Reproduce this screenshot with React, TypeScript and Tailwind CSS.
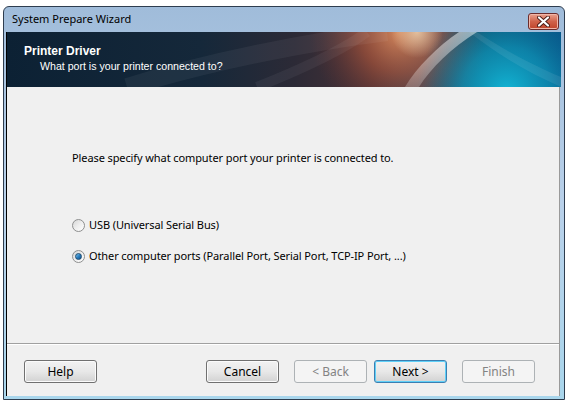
import React from "react";

const UI_FONT = "font-['Noto_Sans','Open_Sans',sans-serif]";

function Banner() {
  return (
    <svg
      className="absolute inset-0"
      width="554"
      height="55"
      viewBox="0 0 554 55"
      preserveAspectRatio="none"
    >
      <defs>
        <linearGradient id="base" x1="0" y1="0" x2="1" y2="0">
          <stop offset="0" stopColor="#0c2134" />
          <stop offset="0.35" stopColor="#15283a" />
          <stop offset="0.52" stopColor="#2c2a36" />
          <stop offset="0.66" stopColor="#4a3236" />
          <stop offset="0.76" stopColor="#4b4d58" />
          <stop offset="0.86" stopColor="#0f5a78" />
          <stop offset="1" stopColor="#08558a" />
        </linearGradient>
        <radialGradient id="orange" cx="392" cy="0" r="90" gradientUnits="userSpaceOnUse">
          <stop offset="0" stopColor="#e39060" stopOpacity="0.9" />
          <stop offset="0.45" stopColor="#b85a3c" stopOpacity="0.55" />
          <stop offset="1" stopColor="#6a3030" stopOpacity="0" />
        </radialGradient>
        <radialGradient id="cream" cx="410" cy="0" r="26" gradientUnits="userSpaceOnUse">
          <stop offset="0" stopColor="#f0d4b0" stopOpacity="0.8" />
          <stop offset="1" stopColor="#f0d4b0" stopOpacity="0" />
        </radialGradient>
        <radialGradient id="cyan" cx="500" cy="60" r="90" gradientUnits="userSpaceOnUse">
          <stop offset="0" stopColor="#12b6d6" stopOpacity="1" />
          <stop offset="0.5" stopColor="#0e94b8" stopOpacity="0.7" />
          <stop offset="1" stopColor="#0a6a90" stopOpacity="0" />
        </radialGradient>
        <linearGradient id="band" x1="0" y1="0" x2="0" y2="1">
          <stop offset="0" stopColor="#ffffff" stopOpacity="0.5" />
          <stop offset="1" stopColor="#ffffff" stopOpacity="0.22" />
        </linearGradient>
      </defs>
      <rect width="554" height="55" fill="url(#base)" />
      <rect width="554" height="55" fill="url(#orange)" />
      <rect width="554" height="55" fill="url(#cyan)" />
      <rect width="554" height="55" fill="url(#cream)" />
      <path d="M120 55 C 200 30, 300 10, 380 0" stroke="#ffffff" strokeOpacity="0.05" strokeWidth="18" fill="none" />
      <path d="M250 55 C 300 35, 340 15, 360 0" stroke="#ffffff" strokeOpacity="0.05" strokeWidth="10" fill="none" />
      <path d="M452 0 C 430 15, 410 35, 398 55 L 412 55 C 424 36, 444 16, 470 0 Z" fill="url(#band)" />
      <path d="M470 0 C 500 20, 530 35, 554 45 L 554 55 C 520 40, 490 22, 462 0 Z" fill="#ffffff" fillOpacity="0.08" />
    </svg>
  );
}

function Radio({ checked }: { checked?: boolean }) {
  return (
    <span className="relative flex h-[13px] w-[13px] items-center justify-center rounded-full border border-[#8e8f8f] bg-gradient-to-br from-[#d6d6d6] via-[#eeeeee] to-[#ffffff]">
      {checked && (
        <span className="h-[7px] w-[7px] rounded-full border border-[#1c4a70] bg-gradient-to-br from-[#7cc6ee] via-[#2a7fc0] to-[#0f4f8a]" />
      )}
    </span>
  );
}

function Button({
  label,
  disabled,
  primary,
}: {
  label: string;
  disabled?: boolean;
  primary?: boolean;
}) {
  if (disabled) {
    return (
      <div className="flex h-[23px] w-[73px] items-center justify-center rounded-[3px] border border-[#adb2b5] bg-[#f4f4f4] text-[12px] text-[#838383]">
        {label}
      </div>
    );
  }
  return (
    <div
      className={
        "flex h-[23px] w-[73px] items-center justify-center rounded-[3px] border bg-gradient-to-b from-[#f2f2f2] via-[#e8e8e8] to-[#d2d2d2] text-[12px] text-[#000000] " +
        (primary
          ? "border-[#3c7fb1] shadow-[inset_0_0_0_1px_#5fd0f8]"
          : "border-[#707070] shadow-[inset_0_0_0_1px_#fbfbfb]")
      }
    >
      {label}
    </div>
  );
}

export default function App() {
  return (
    <div className={`h-[407px] w-[570px] bg-white pl-[3px] pt-[6px] ${UI_FONT}`}>
      <div className="flex h-[394px] w-[562px] flex-col rounded-t-[6px] border border-[#2e3d4f] bg-gradient-to-b from-[#a0bcda] via-[#b9d1ea] to-[#a9d6ec]">
        {/* title bar */}
        <div className="flex h-[25px] items-center justify-between pl-[8px] pr-[5px]">
          <span className="text-[11px] text-[#000000]">System Prepare Wizard</span>
          <div className="mt-[4px] flex h-[17px] w-[31px] items-center justify-center rounded-[3px] border border-[#6b2c2c] bg-gradient-to-b from-[#e9a290] via-[#d0624a] to-[#c0442a] shadow-[inset_0_0_0_1px_#f0b6a8]">
            <svg width="13" height="11" viewBox="0 0 13 11">
              <path
                d="M2 1.5 L11 9.5 M11 1.5 L2 9.5"
                stroke="#4a1a14"
                strokeWidth="4"
                strokeLinecap="round"
              />
              <path
                d="M2 1.5 L11 9.5 M11 1.5 L2 9.5"
                stroke="#ffffff"
                strokeWidth="2.2"
                strokeLinecap="round"
              />
            </svg>
          </div>
        </div>

        {/* client area */}
        <div className="mb-[3px] ml-[2px] mr-[4px] flex flex-1 flex-col border-l border-r border-l-[#000000] border-r-[#9a9a9a] bg-[#f0f0f0]">
          <div className="relative h-[55px] border-b border-[#ffffff]">
            <Banner />
            <div className="relative flex flex-col pl-[17px] pt-[12px] font-['Liberation_Sans',Arial,sans-serif] text-white">
              <span className="text-[12px] font-bold leading-[15px]">Printer Driver</span>
              <span className="pl-[16px] text-[10.6px] leading-[14px]">
                What port is your printer connected to?
              </span>
            </div>
          </div>

          <div className="flex flex-1 flex-col pl-[65px] pt-[63px] text-[11px] tracking-[-0.1px] text-[#000000]">
            <p className="leading-[16px]">
              Please specify what computer port your printer is connected to.
            </p>
            <div className="mt-[51px] flex items-center gap-[4px] leading-[16px]">
              <Radio />
              <span>USB (Universal Serial Bus)</span>
            </div>
            <div className="mt-[15px] flex items-center gap-[4px] leading-[16px]">
              <Radio checked />
              <span>Other computer ports (Parallel Port, Serial Port, TCP-IP Port, ...)</span>
            </div>
          </div>

          <div className="flex h-[53px] items-start border-t border-[#a0a0a0] pl-[17px] pt-[16px] shadow-[inset_0_1px_0_#ffffff]">
            <Button label="Help" />
            <div className="ml-[109px] flex gap-[15px]">
              <Button label="Cancel" />
              <Button label="< Back" disabled />
            </div>
            <div className="ml-[7px] flex gap-[15px]">
              <Button label="Next >" primary />
              <Button label="Finish" disabled />
            </div>
          </div>
        </div>
      </div>
    </div>
  );
}
